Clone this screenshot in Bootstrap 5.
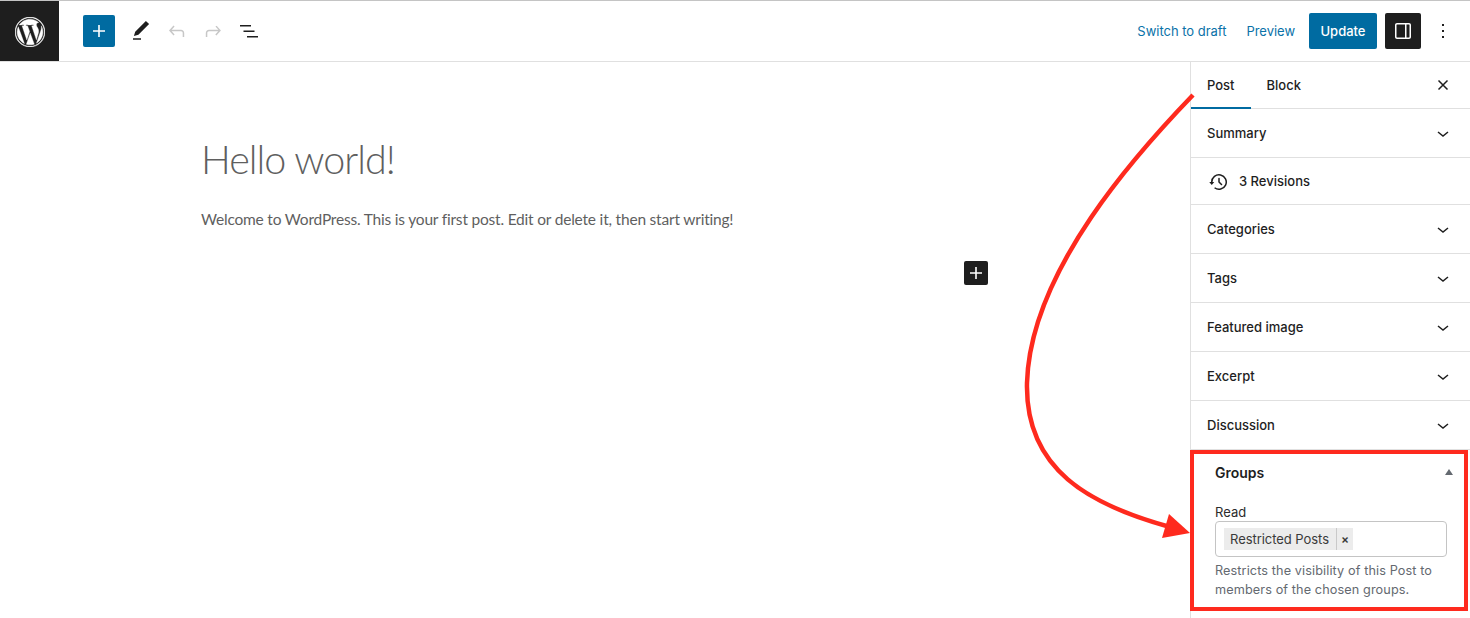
<!DOCTYPE html>
<html lang="en">
<head>
<meta charset="utf-8">
<title>Edit Post</title>
<link href="https://cdn.jsdelivr.net/npm/bootstrap@5.3.0/dist/css/bootstrap.min.css" rel="stylesheet">
<style>
html,body{height:618px;overflow:hidden;background:#fff}
body{font-family:Inter,"Liberation Sans",sans-serif;font-size:13px;color:#1e1e1e;position:relative;border-top:1px solid #c4c4c4}
.wp-top{height:61px;border-bottom:1px solid #e0e0e0}
.wp-logo{width:59px;height:60px;background:#1e1e1e;padding-top:1px}
.wp-tools{padding-left:24px;gap:4px}
.wp-add{width:32px;height:32px;background:#006ba1;border-radius:2px;padding:0;border:0;margin-right:6px}
.wp-tool{width:32px;height:32px}
.wp-link{color:#0a72a8;font-size:13px;letter-spacing:-.02px;padding-top:1px}
.wp-link-a{margin-right:20px}
.wp-link-b{margin-right:14px}
.wp-update{background:#006ba1;color:#fff;font-size:13px;font-weight:500;height:36px;width:68px;border-radius:2px;border:0;padding:1px 0 0;margin-right:8px}
.wp-toggle{background:#1e1e1e;width:36px;height:36px;border-radius:2px}
.wp-more{width:24px;height:36px;margin:0 15px 0 10px}
.wp-main{height:556px}
.wp-canvas{min-width:0;padding:0 0 0 201px;color:#5f5f5f}
.wp-title{font-family:Lato,sans-serif;font-weight:300;font-size:39.5px;line-height:48px;margin:73px 0 0;letter-spacing:-1px}
.wp-para{font-family:Lato,sans-serif;font-size:15.5px;line-height:24px;margin:24px 0 0;letter-spacing:-.2px}
.wp-inline-add{background:#1e1e1e;width:24px;height:24px;border-radius:2px;margin:30px 0 0 763px}
.wp-side{width:280px;border-left:1px solid #e0e0e0}
.wp-tabs{height:47px;border-bottom:1px solid #e0e0e0;padding-right:19px}
.wp-tab{padding:0 16px;height:47px;line-height:46px;font-weight:500;font-size:13px}
.wp-tab-on{box-shadow:inset 0 -2px 0 #006ba1}
.wp-row{height:49px;padding:2px 19px 0 16px;border-bottom:1px solid #e0e0e0;font-weight:500;font-size:13px}
.wp-row-rev{height:47px}
.wp-groups{padding:0 24px;height:162px}
.wp-groups-head{height:48px;padding-bottom:4px;font-size:14px;font-weight:600}
.wp-caret{width:0;height:0;border-left:4.5px solid transparent;border-right:4.5px solid transparent;border-bottom:6px solid #646970;margin-right:-7px}
.wp-label{font-size:13px;line-height:18px;margin-top:5px;color:#2c2c2c}
.wp-field{width:232px;height:36px;border:1px solid #c4c4c4;border-radius:4px;padding:0 8px}
.wp-tag{background:#ececec;height:22px;line-height:22px;color:#3a3a3a;font-size:13px;letter-spacing:-.05px}
.wp-tag-text{padding:0 7px 0 6px;border-right:1px solid #c9c9c9}
.wp-tag-x{width:16px;text-align:center;font-size:12px;font-weight:600}
.wp-help{font-size:12.7px;line-height:19px;color:#646970;margin-top:4px;letter-spacing:.1px}
.wp-redbox{position:absolute;left:1190px;top:449px;width:278px;height:161px;border:4px solid #fe2a1e}
.wp-arrow{position:absolute;left:0;top:-1px;pointer-events:none}
</style>
</head>
<body>
<header class="wp-top d-flex align-items-center">
  <div class="wp-logo d-flex align-items-center justify-content-center">
    <svg width="30" height="30" viewBox="0 0 122.5 122.5" fill="#fff" stroke="#fff" stroke-width="1.5"><path d="M8.7 61.3c0 20.8 12.1 38.8 29.7 47.4L13.3 39.9c-2.9 6.6-4.6 13.8-4.6 21.4zm88-2.7c0-6.500-2.300-11-4.300-14.500-2.700-4.300-5.200-8-5.200-12.300 0-4.800 3.700-9.300 8.800-9.300h.7C87.400 14 74.900 8.700 61.300 8.700c-18.400 0-34.500 9.400-43.900 23.700 1.200 0 2.400.1 3.400.1 5.500 0 14-.7 14-.7 2.800-.2 3.200 4 .3 4.300 0 0-2.800.3-6 .5l19.100 56.900 11.500-34.500-8.200-22.400c-2.800-.2-5.500-.5-5.500-.5-2.800-.2-2.500-4.500.3-4.300 0 0 8.700.7 13.800.7 5.500 0 14-.7 14-.7 2.800-.2 3.200 4 .3 4.300 0 0-2.900.3-6 .5l19 56.500 5.200-17.500c2.300-7.300 4-12.500 4-17zM62.200 65.900l-15.800 45.800c4.700 1.400 9.700 2.100 14.900 2.100 6.100 0 12-1.100 17.500-3-.1-.2-.3-.5-.4-.7L62.200 65.900zM107.400 36c.2 1.700.4 3.500.4 5.400 0 5.300-1 11.300-4 18.800l-16.100 46.500c15.700-9.100 26.200-26.100 26.200-45.500 0-9.100-2.300-17.700-6.500-25.200zM61.300 0C27.500 0 0 27.500 0 61.300s27.500 61.300 61.300 61.300 61.300-27.500 61.300-61.300S95 0 61.300 0zm0 119.700c-32.200 0-58.400-26.200-58.400-58.400S29 2.800 61.300 2.800s58.400 26.200 58.400 58.400-26.200 58.500-58.400 58.500z"/></svg>
  </div>
  <div class="wp-tools d-flex align-items-center flex-grow-1">
    <button class="wp-add d-flex align-items-center justify-content-center" aria-label="Add block"><svg width="24" height="24" viewBox="0 0 24 24" fill="#fff"><path d="M18 11.200h-5.200V6h-1.600v5.200H6v1.600h5.200V18h1.600v-5.200H18z"/></svg></button>
    <div class="wp-tool d-flex align-items-center justify-content-center"><svg width="24" height="24" viewBox="0 0 24 24" fill="#1e1e1e"><path d="M20.100 5.100L16.900 2 6.200 12.700l-1.300 4.400 4.500-1.300L20.100 5.100zM4 20.800h8v-1.500H4v1.500z"/></svg></div>
    <div class="wp-tool d-flex align-items-center justify-content-center"><svg width="24" height="24" viewBox="0 0 24 24" fill="#c7c7c7"><path d="M18.300 11.700c-.6-.6-1.400-.9-2.300-.9H6.700l2.900-3.300-1.100-1-4.500 5 4.500 5 1.100-1-2.900-3.200H16c.5 0 .9.200 1.200.5.3.3.5.7.5 1.200v4h1.500v-4c0-.9-.3-1.700-.9-2.300z"/></svg></div>
    <div class="wp-tool d-flex align-items-center justify-content-center"><svg width="24" height="24" viewBox="0 0 24 24" fill="#c7c7c7"><path d="M15.600 6.500l-1.100 1 2.900 3.300H8c-.9 0-1.700.3-2.300.9-.6.6-.9 1.400-.9 2.300v4h1.500v-4c0-.5.2-.9.5-1.200.3-.3.7-.5 1.200-.5h9.200l-2.900 3.200 1.100 1 4.500-5-4.500-5z"/></svg></div>
    <div class="wp-tool d-flex align-items-center justify-content-center"><svg width="24" height="24" viewBox="0 0 24 24" fill="#1e1e1e"><path d="M3 6h11v1.500H3V6zm3.500 5.500h11V13h-11v-1.500zM21 17H10v1.500h11V17z"/></svg></div>
  </div>
  <div class="d-flex align-items-center">
    <a class="wp-link wp-link-a text-decoration-none" href="#">Switch to draft</a>
    <a class="wp-link wp-link-b text-decoration-none" href="#">Preview</a>
    <button class="wp-update">Update</button>
    <div class="wp-toggle d-flex align-items-center justify-content-center"><svg width="24" height="24" viewBox="0 0 24 24" fill="#fff"><path d="M18 4H6c-1.100 0-2 .9-2 2v12c0 1.100.9 2 2 2h12c1.100 0 2-.9 2-2V6c0-1.100-.9-2-2-2zM5.500 18V6c0-.3.2-.5.5-.5h8v13H6c-.3 0-.5-.2-.5-.5zm13 0c0 .3-.2.5-.5.5h-2.500v-13H18c.3 0 .5.2.5.5v12z"/></svg></div>
    <div class="wp-more d-flex align-items-center justify-content-center"><svg width="24" height="24" viewBox="0 0 24 24" fill="#1e1e1e"><path d="M13 19h-2v-2h2v2zm0-6h-2v-2h2v2zm0-6h-2V5h2v2z"/></svg></div>
  </div>
</header>
<div class="wp-main d-flex">
  <main class="wp-canvas flex-grow-1">
    <h1 class="wp-title">Hello world!</h1>
    <p class="wp-para">Welcome to WordPress. This is your first post. Edit or delete it, then start writing!</p>
    <div class="wp-inline-add d-flex align-items-center justify-content-center"><svg width="24" height="24" viewBox="0 0 24 24" fill="#fff"><path d="M18 11.200h-5.200V6h-1.600v5.200H6v1.600h5.200V18h1.600v-5.200H18z"/></svg></div>
  </main>
  <aside class="wp-side flex-shrink-0">
    <div class="wp-tabs d-flex align-items-center justify-content-between">
      <div class="d-flex"><div class="wp-tab wp-tab-on">Post</div><div class="wp-tab">Block</div></div>
      <svg width="16" height="16" viewBox="0 0 16 16" fill="none" stroke="#1e1e1e" stroke-width="1.500"><path d="M3.500 3.500l9 9M12.500 3.500l-9 9"/></svg>
    </div>
    <div class="wp-row d-flex align-items-center justify-content-between">Summary<svg width="16" height="16" viewBox="0 0 16 16" fill="none" stroke="#1e1e1e" stroke-width="1.500"><path d="M3 6l5 4 5-4"/></svg></div>
    <div class="wp-row wp-row-rev d-flex align-items-center"><svg width="24" height="24" viewBox="0 0 24 24" fill="#1e1e1e" class="me-2"><path d="M5.500 12h1.750l-2.500 3-2.500-3H4a8 8 0 1 1 3.134 6.350l.907-1.194A6.500 6.500 0 1 0 5.500 12zm9.530 1.970l-2.280-2.280V8.500a.75.75 0 0 0-1.500 0V12c0 .199.079.39.22.53l2.500 2.500a.75.75 0 1 0 1.060-1.060z"/></svg>3 Revisions</div>
    <div class="wp-row d-flex align-items-center justify-content-between">Categories<svg width="16" height="16" viewBox="0 0 16 16" fill="none" stroke="#1e1e1e" stroke-width="1.500"><path d="M3 6l5 4 5-4"/></svg></div>
    <div class="wp-row d-flex align-items-center justify-content-between">Tags<svg width="16" height="16" viewBox="0 0 16 16" fill="none" stroke="#1e1e1e" stroke-width="1.500"><path d="M3 6l5 4 5-4"/></svg></div>
    <div class="wp-row d-flex align-items-center justify-content-between">Featured image<svg width="16" height="16" viewBox="0 0 16 16" fill="none" stroke="#1e1e1e" stroke-width="1.500"><path d="M3 6l5 4 5-4"/></svg></div>
    <div class="wp-row d-flex align-items-center justify-content-between">Excerpt<svg width="16" height="16" viewBox="0 0 16 16" fill="none" stroke="#1e1e1e" stroke-width="1.500"><path d="M3 6l5 4 5-4"/></svg></div>
    <div class="wp-row d-flex align-items-center justify-content-between">Discussion<svg width="16" height="16" viewBox="0 0 16 16" fill="none" stroke="#1e1e1e" stroke-width="1.500"><path d="M3 6l5 4 5-4"/></svg></div>
    <section class="wp-groups">
      <div class="wp-groups-head d-flex align-items-center justify-content-between">Groups<span class="wp-caret"></span></div>
      <div class="wp-label">Read</div>
      <div class="wp-field d-flex align-items-center"><div class="wp-tag d-flex"><span class="wp-tag-text">Restricted Posts</span><span class="wp-tag-x">×</span></div></div>
      <div class="wp-help">Restricts the visibility of this Post to members of the chosen groups.</div>
    </section>
  </aside>
</div>
<div class="wp-redbox"></div>
<svg class="wp-arrow" width="1470" height="618" viewBox="0 0 1470 618"><path d="M1193 95C1140 150 1030 270 1027 383C1025 470 1090 505 1170 527" fill="none" stroke="#fe2a1e" stroke-width="4.500"/><path d="M1190 533L1162 538L1169 514Z" fill="#fe2a1e"/></svg>
</body>
</html>
